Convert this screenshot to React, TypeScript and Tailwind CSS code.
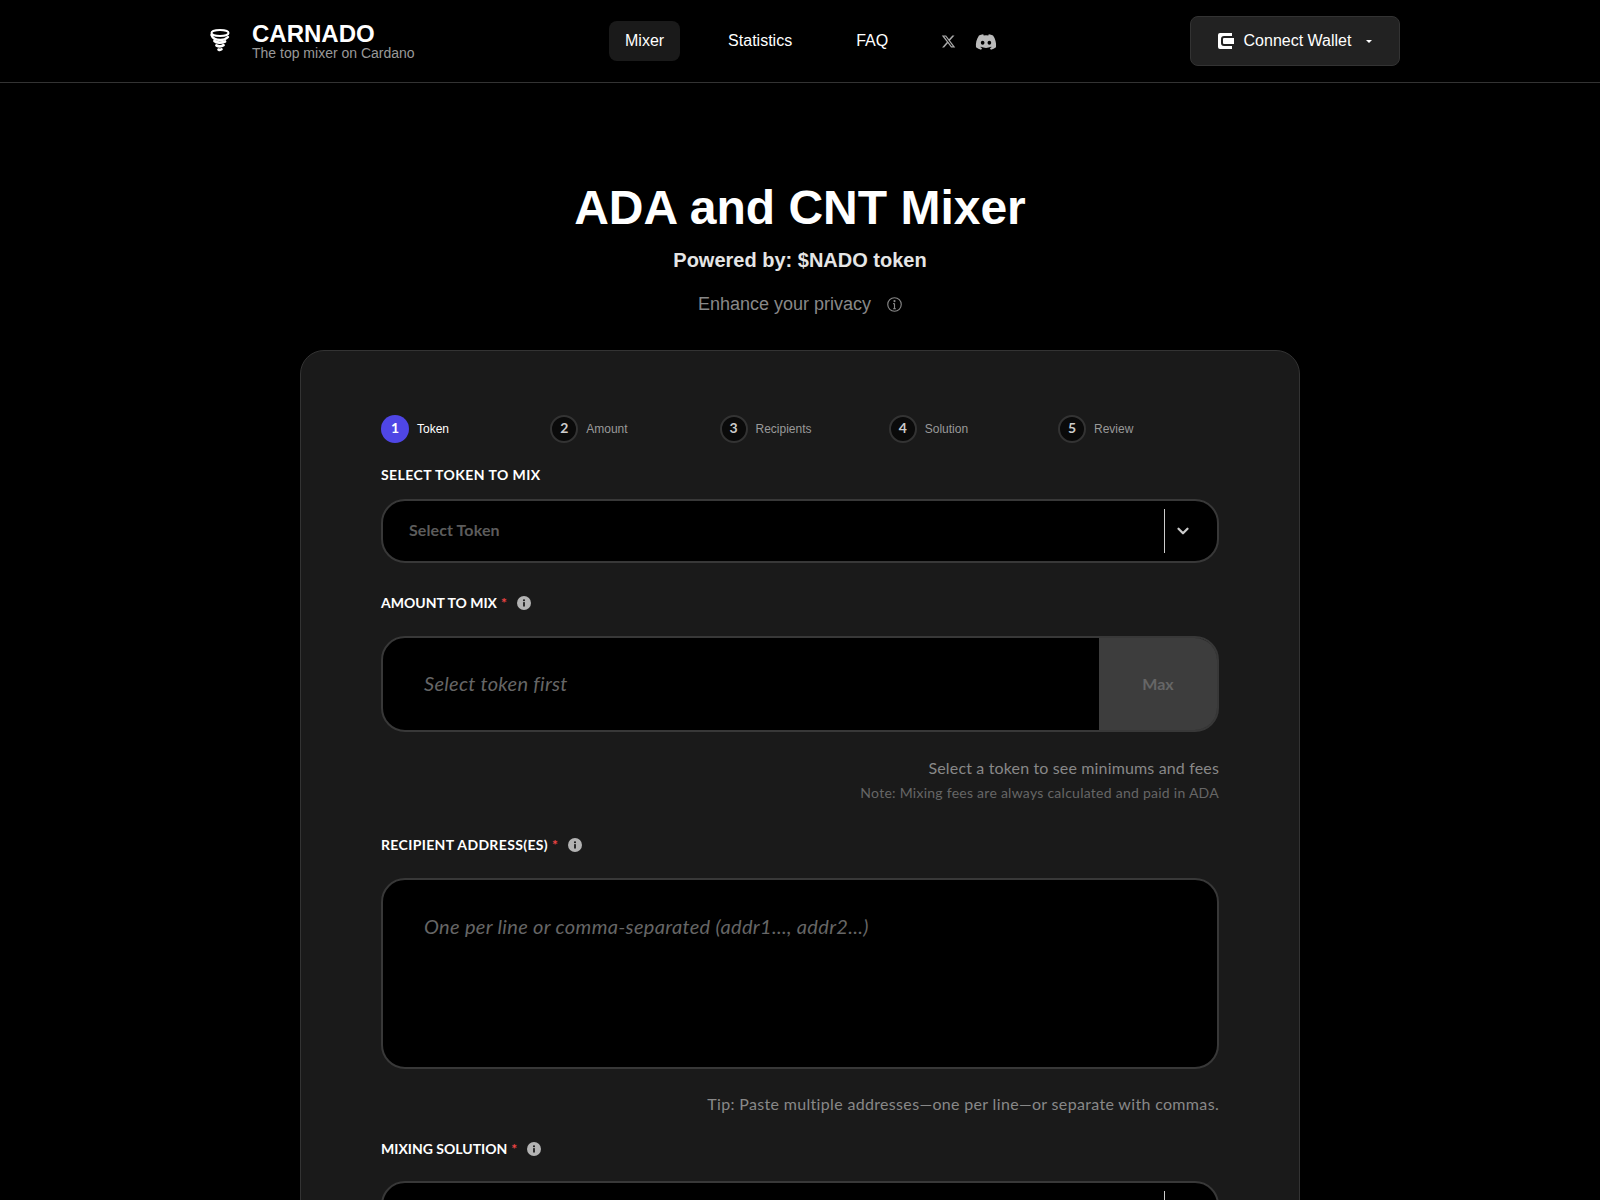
import { FaDiscord } from "react-icons/fa"
import { FaXTwitter } from "react-icons/fa6"
import { ChevronDown } from "lucide-react"

const steps = ["Token", "Amount", "Recipients", "Solution", "Review"]

const FormLabel = ({ text, required, className }: { text: string; required?: boolean; className?: string }) => (
  <div className={`flex items-center font-['Lato',sans-serif] text-sm font-bold uppercase text-white ${className ?? ""}`}>
    <span>{text}</span>
    {required && <span className="ml-1 tracking-normal text-[#ef4444]">*</span>}
    {required && (
      <svg viewBox="0 0 16 16" className="ml-[10px] size-[14px]">
        <circle cx="8" cy="8" r="8" fill="#b3b3b3" />
        <rect x="7" y="7" width="2" height="5" fill="#1a1a1a" />
        <circle cx="8" cy="4.800" r="1.200" fill="#1a1a1a" />
      </svg>
    )}
  </div>
)

const TokenSelect = ({ placeholder }: { placeholder: string }) => (
  <div className="flex h-[64px] items-center rounded-[24px] border-2 border-[#383838] bg-black pl-[26px] pr-[16px] font-['Lato',sans-serif]">
    <span className="flex-1 pb-[2px] font-bold tracking-[0.1px] text-[#5c5c5c]">{placeholder}</span>
    <div className="h-[44px] w-px bg-[#ccc]" />
    <div className="flex w-[36px] justify-center">
      <ChevronDown size={18} strokeWidth={3} className="text-[#ccc]" />
    </div>
  </div>
)

const App = () => {
  return (
    <div className="h-[1200px] overflow-hidden bg-black font-['Liberation_Sans',sans-serif] text-white">
      <header className="flex h-[83px] justify-center border-b border-[#333]">
        <div className="flex w-[1200px] items-center pl-[10px]">
          <div className="flex w-[399px] items-center gap-[22px]">
            <svg viewBox="0 0 20 24" className="h-[24px] w-[20px]" fill="none" stroke="#fff" strokeLinecap="round">
              <ellipse cx="10" cy="4" rx="8.500" ry="3" strokeWidth="2" />
              <path d="M1.500 6c1 3.500 4.500 5 9 5 2.500 0 5-.5 7.500-3" strokeWidth="2.400" />
              <path d="M4.500 12c2 2 7 2.200 10.500 .5" strokeWidth="2.800" />
              <path d="M6.500 16.500c2 1 5 1 7-.3" strokeWidth="2.800" />
              <path d="M8.500 20.500c1 .5 2 .5 3-.2" strokeWidth="2.600" />
            </svg>
            <div className="flex flex-col">
              <span className="text-2xl/[24px] font-bold">CARNADO</span>
              <span className="text-sm/[14px] text-[#999]">The top mixer on Cardano</span>
            </div>
          </div>
          <nav className="flex items-center gap-8">
            <a className="rounded-lg bg-[#1a1a1a] px-4 py-2 leading-6">Mixer</a>
            <a className="px-4 py-2 leading-6">Statistics</a>
            <a className="px-4 py-2 leading-6">FAQ</a>
            <div className="ml-[5px] mt-[1px] flex items-center gap-[19px]">
              <FaXTwitter size={15} className="text-[#aaa]" />
              <FaDiscord size={22} className="text-[#bbb]" />
            </div>
          </nav>
          <button className="ml-auto flex h-[50px] w-[210px] items-center justify-center gap-[10px] rounded-lg border border-[#333] bg-[#222] text-white">
            <svg viewBox="0 0 16 16" className="size-4" fill="#fff">
              <path fillRule="evenodd" d="M2 0h12v3H6a3 3 0 0 0-3 3v4a3 3 0 0 0 3 3h8v3H2a2 2 0 0 1-2-2V2a2 2 0 0 1 2-2zM6 5h10v6H6a1 1 0 0 1-1-1V6a1 1 0 0 1 1-1z" />
            </svg>
            <span className="-mt-[1px]">Connect Wallet</span>
            <span className="ml-[5px] size-0 border-x-[3.5px] border-t-[3.5px] border-x-transparent border-t-white" />
          </button>
        </div>
      </header>

      <main className="flex flex-col items-center pt-[97px]">
        <h1 className="text-5xl/[56px] font-bold">ADA and CNT Mixer</h1>
        <p className="mt-[10px] text-xl/[28px] font-bold text-[#e5e5e5]">Powered by: $NADO token</p>
        <div className="mt-[16px] flex items-center gap-4 text-lg/[28px] text-[#888]">
          <span>Enhance your privacy</span>
          <svg viewBox="0 0 16 16" className="size-[15px]" fill="none" stroke="#888" strokeWidth="1.200">
            <circle cx="8" cy="8" r="7.200" />
            <path d="M8 7v5.500M6.500 7H8M6.500 12.500h3" />
            <circle cx="8" cy="4.300" r=".6" fill="#888" />
          </svg>
        </div>

        <section className="mt-[32px] w-[1000px] rounded-[24px] border border-[#333] bg-[#1a1a1a] px-20 pt-16">
          <div className="flex">
            {steps.map((step, i) => (
              <div key={step} className="flex w-[169.25px] shrink-0 items-center gap-2">
                <div className={i === 0
                  ? "flex size-7 items-center justify-center rounded-full bg-[#4f46e5] pb-[2px] font-['Lato',sans-serif] text-sm font-bold text-white"
                  : "flex size-7 items-center justify-center rounded-full border-2 border-[#333] bg-[#0a0a0a] pb-[2px] font-['Lato',sans-serif] text-sm font-bold text-[#ccc]"}>
                  {i + 1}
                </div>
                <span className={i === 0 ? "text-xs text-white" : "text-xs text-[#999]"}>{step}</span>
              </div>
            ))}
          </div>

          <div className="mt-[22px] mb-[14px]"><FormLabel text="Select token to mix" className="tracking-[0.43px]" /></div>
          <TokenSelect placeholder="Select Token" />

          <div className="mt-[30px] mb-[23px]"><FormLabel text="Amount to mix" required /></div>
          <div className="flex h-[96px] overflow-hidden rounded-[24px] border-2 border-[#383838] bg-black font-['Lato',sans-serif]">
            <div className="flex flex-1 items-center pb-[2px] pl-[41px] text-xl italic tracking-[0.3px] text-[#666]">Select token first</div>
            <div className="-m-[2px] flex w-[120px] items-center justify-center rounded-r-[24px] border-2 border-l-0 border-[#5c5c5c] bg-[#3d3d3d] font-bold text-[#666]">Max</div>
          </div>

          <div className="mt-[25px] text-right font-['Lato',sans-serif]">
            <p className="text-base/[22px] tracking-[0.15px] text-[#888]">Select a token to see minimums and fees</p>
            <p className="mt-[3px] text-sm/[22px] tracking-[0.26px] text-[#666]">Note: Mixing fees are always calculated and paid in ADA</p>
          </div>

          <div className="mt-[31px] mb-[23px]"><FormLabel text="Recipient address(es)" required className="tracking-[0.35px]" /></div>
          <div className="h-[191px] rounded-[24px] border-2 border-[#383838] bg-black pl-[41px] pt-[32px] font-['Lato',sans-serif] text-xl/[28px] italic tracking-[0.33px] text-[#666]">
            One per line or comma-separated (addr1..., addr2...)
          </div>

          <p className="mt-[24px] text-right font-['Lato',sans-serif] text-base/[22px] tracking-[0.33px] text-[#888]">Tip: Paste multiple addresses—one per line—or separate with commas.</p>

          <div className="mt-[24px] mb-[22px]"><FormLabel text="Mixing solution" required /></div>
          <TokenSelect placeholder="" />
        </section>
      </main>
    </div>
  )
}

export default App
